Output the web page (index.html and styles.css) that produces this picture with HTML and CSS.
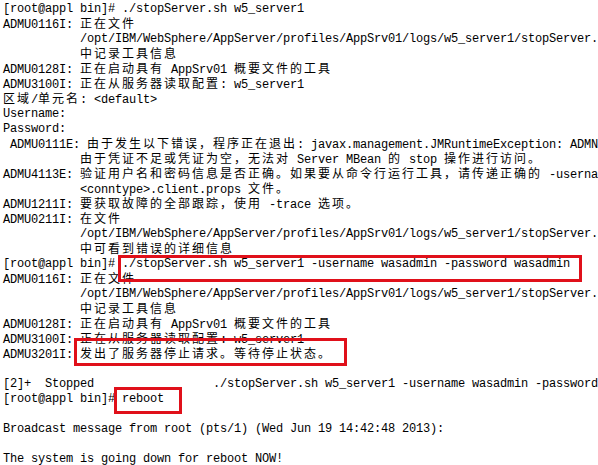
FILE: index.html
```html
<!DOCTYPE html>
<html lang="zh">
<head>
<meta charset="utf-8">
<title>stopServer</title>
<link rel="stylesheet" href="styles.css">
</head>
<body>
<div class="term">
<div class="ln">[root@appl bin]# ./stopServer.sh w5_server1</div>
<div class="ln">ADMU0116I: <span class="cj">正在文件</span></div>
<div class="ln">           /opt/IBM/WebSphere/AppServer/profiles/AppSrv01/logs/w5_server1/stopServer.log</div>
<div class="ln">           <span class="cj">中记录工具信息</span></div>
<div class="ln">ADMU0128I: <span class="cj">正在启动具有</span> AppSrv01 <span class="cj">概要文件的工具</span></div>
<div class="ln">ADMU3100I: <span class="cj">正在从服务器读取配置</span>: w5_server1</div>
<div class="ln"><span class="cj">区域</span>/<span class="cj">单元名</span>: &lt;default&gt;</div>
<div class="ln">Username:</div>
<div class="ln">Password:</div>
<div class="ln"> ADMU0111E: <span class="cj">由于发生以下错误，程序正在退出</span>: javax.management.JMRuntimeException: ADMN0022E</div>
<div class="ln">           <span class="cj">由于凭证不足或凭证为空，无法对</span> Server MBean <span class="cj">的</span> stop <span class="cj">操作进行访问。</span></div>
<div class="ln">ADMU4113E: <span class="cj">验证用户名和密码信息是否正确。如果要从命令行运行工具，请传递正确的</span> -username</div>
<div class="ln">           &lt;conntype&gt;.client.props <span class="cj">文件。</span></div>
<div class="ln">ADMU1211I: <span class="cj">要获取故障的全部跟踪，使用</span> -trace <span class="cj">选项。</span></div>
<div class="ln">ADMU0211I: <span class="cj">在文件</span></div>
<div class="ln">           /opt/IBM/WebSphere/AppServer/profiles/AppSrv01/logs/w5_server1/stopServer.log</div>
<div class="ln">           <span class="cj">中可看到错误的详细信息</span></div>
<div class="ln">[root@appl bin]# ./stopServer.sh w5_server1 -username wasadmin -password wasadmin</div>
<div class="ln">ADMU0116I: <span class="cj">正在文件</span></div>
<div class="ln">           /opt/IBM/WebSphere/AppServer/profiles/AppSrv01/logs/w5_server1/stopServer.log</div>
<div class="ln">           <span class="cj">中记录工具信息</span></div>
<div class="ln">ADMU0128I: <span class="cj">正在启动具有</span> AppSrv01 <span class="cj">概要文件的工具</span></div>
<div class="ln">ADMU3100I: <span class="cj">正在从服务器读取配置</span>: w5_server1</div>
<div class="ln">ADMU3201I: <span class="cj">发出了服务器停止请求。等待停止状态。</span></div>
<div class="ln"> </div>
<div class="ln">[2]+  Stopped                 ./stopServer.sh w5_server1 -username wasadmin -password wasadmin</div>
<div class="ln">[root@appl bin]# reboot</div>
<div class="ln"> </div>
<div class="ln">Broadcast message from root (pts/1) (Wed Jun 19 14:42:48 2013):</div>
<div class="ln"> </div>
<div class="ln">The system is going down for reboot NOW!</div>
<div class="mark mark-cmd"></div>
<div class="mark mark-stop"></div>
<div class="mark mark-reboot"></div>
</div>
</body>
</html>
```
FILE: styles.css
```css
html, body {
  margin: 0;
  padding: 0;
  background: #ffffff;
  overflow: hidden;
}
body {
  width: 598px;
  height: 465px;
}
.term {
  position: relative;
  width: 598px;
  height: 465px;
  overflow: hidden;
  padding: 2px 0 0 3px;
  box-sizing: border-box;
  font-family: "Liberation Mono", "DejaVu Sans Mono", monospace;
  font-size: 12px;
  letter-spacing: -0.2px;
  color: #000000;
}
.ln {
  height: 15px;
  line-height: 15px;
  white-space: pre;
}
.cj {
  font-family: "Noto Sans CJK SC", sans-serif;
  font-size: 12px;
  letter-spacing: 2px;
  line-height: 12px;
}
.mark {
  position: absolute;
  border: 3px solid #e0101a;
  box-sizing: border-box;
}
.mark-cmd {
  left: 118px;
  top: 255px;
  width: 464px;
  height: 27px;
}
.mark-stop {
  left: 74px;
  top: 338px;
  width: 273px;
  height: 28px;
}
.mark-reboot {
  left: 114px;
  top: 387px;
  width: 68px;
  height: 27px;
}
```
